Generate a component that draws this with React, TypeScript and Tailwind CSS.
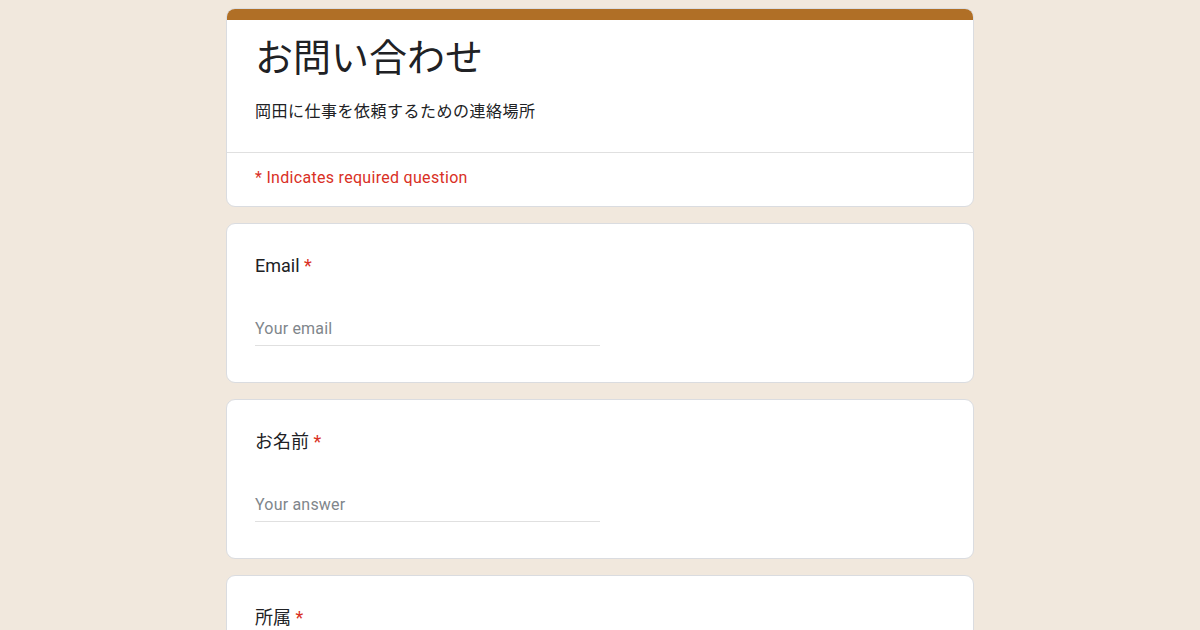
export default function App() {
  const questions = [
    { label: "Email", placeholder: "Your email" },
    { label: "お名前", placeholder: "Your answer" },
    { label: "所属", placeholder: "Your answer" },
  ];

  return (
    <div className="min-h-[630px] h-[630px] overflow-hidden bg-[#f1e8dd] font-['Roboto','Noto_Sans_CJK_JP',sans-serif] text-[#202124]">
      <div className="w-[748px] mx-auto pt-[8px] flex flex-col gap-[16px]">
        <div className="bg-white rounded-[9px] border border-[#dadce0] overflow-hidden">
          <div className="h-[12px] bg-[#b06f26] -mx-px -mt-px" />
          <div className="px-[28px] pt-[14px] pb-[28px]">
            <h1 className="text-[38px] leading-[48px]">お問い合わせ</h1>
            <p className="mt-[18px] text-[16px] leading-[24px] tracking-[0.5px]">岡田に仕事を依頼するための連絡場所</p>
          </div>
          <div className="border-t border-[#e0e0e0] px-[28px] pt-[13px] pb-[16px]">
            <p className="text-[16px] leading-[24px] tracking-[0.3px] text-[#d93025]">* Indicates required question</p>
          </div>
        </div>

        {questions.map((q, i) => (
          <div key={i} className="bg-white rounded-[9px] border border-[#dadce0] px-[28px] pt-[29px] pb-[36px]">
            <div className="text-[18px] leading-[26px]">
              {q.label} <span className="text-[#d93025]">*</span>
            </div>
            <div className="mt-[38px] w-[345px] border-b border-[#e0e0e0] pb-[4px] text-[16px] leading-[24px] tracking-[0.2px] text-[#80868b]">
              {q.placeholder}
            </div>
          </div>
        ))}
      </div>
    </div>
  );
}
